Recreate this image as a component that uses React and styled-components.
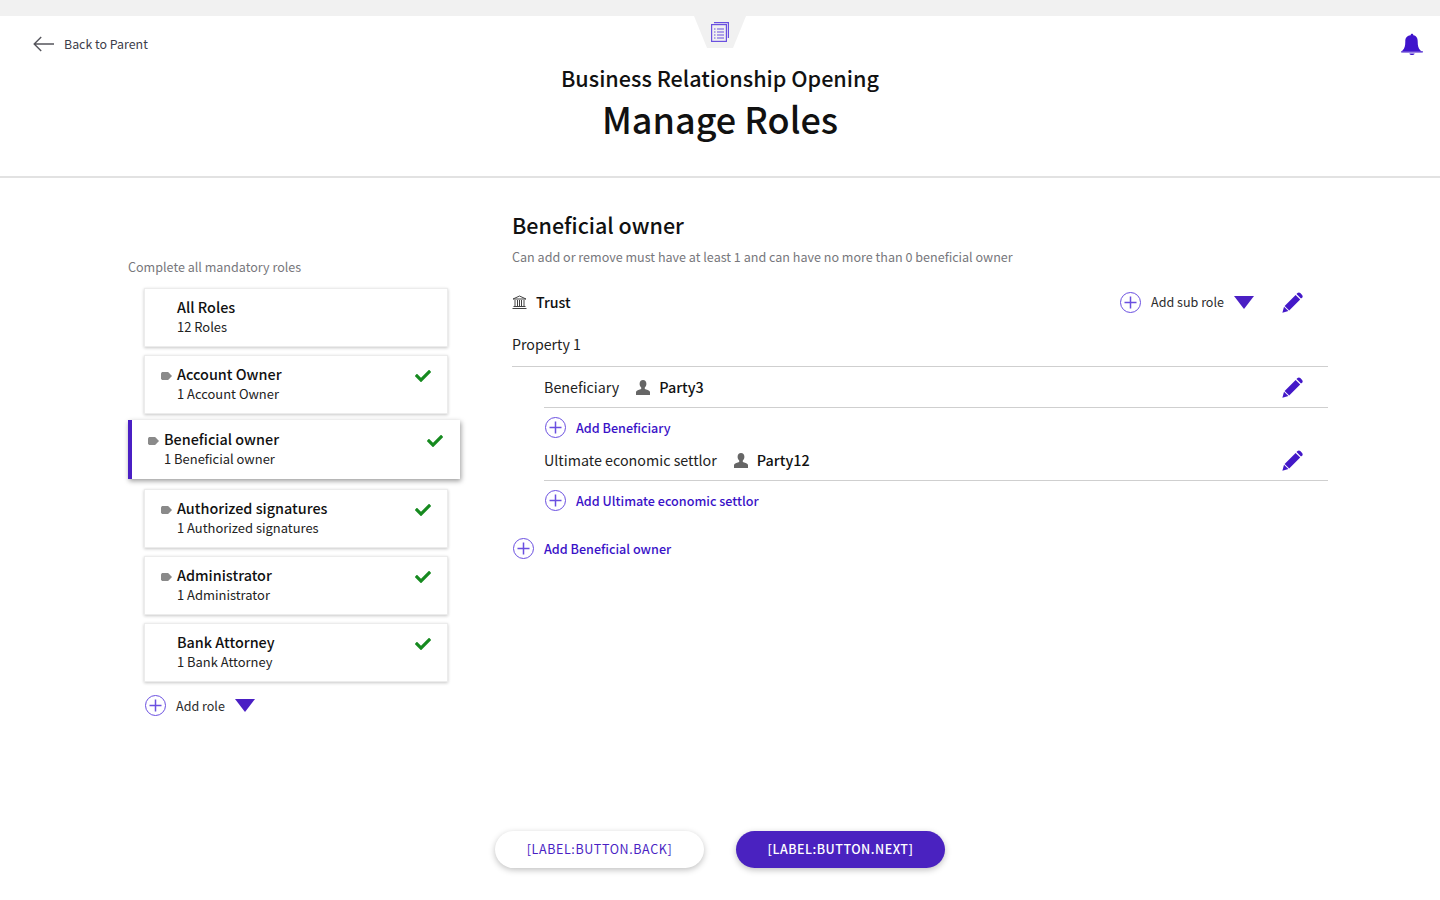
import React from 'react';
import styled, { createGlobalStyle } from 'styled-components';
import { FaCheck } from 'react-icons/fa';

const PURPLE = '#4a1fc4';

const GlobalStyle = createGlobalStyle`
  html, body {
    margin: 0;
    padding: 0;
    background: #fff;
  }
  body {
    font-family: "Noto Sans CJK JP", "Noto Sans", sans-serif;
    color: #1a1a1a;
  }
  * {
    box-sizing: border-box;
  }
`;

const Page = styled.div`
  width: 1440px;
  height: 900px;
  overflow: hidden;
  display: flex;
  flex-direction: column;
`;

const TopStrip = styled.div`
  height: 16px;
  background: #f1f1f1;
`;

const Header = styled.header`
  position: relative;
  height: 162px;
  border-bottom: 2px solid #e2e2e2;
  display: flex;
  flex-direction: column;
  align-items: center;
`;

const DocTab = styled.div`
  width: 52px;
  height: 32px;
  background: #f1f1f1;
  clip-path: polygon(0 0, 100% 0, 75% 100%, 25% 100%);
  display: flex;
  justify-content: center;
  padding-top: 6px;
  color: #6a50e0;
`;

const Subtitle = styled.div`
  margin-top: 14px;
  font-size: 21.6px;
  line-height: 32px;
  font-weight: 500;
  color: #111;
`;

const Title = styled.h1`
  margin: -1px 0 0;
  font-size: 36px;
  line-height: 50px;
  font-weight: 500;
  color: #111;
`;

const BackLink = styled.a`
  position: absolute;
  left: 33px;
  top: 18px;
  display: flex;
  align-items: center;
  gap: 10px;
  font-size: 12.4px;
  line-height: 20px;
  color: #3d3d4a;
`;

const BellButton = styled.div`
  position: absolute;
  right: 17px;
  top: 16px;
  color: #3f14cc;
  display: flex;
`;

const Main = styled.main`
  flex: 1;
  display: flex;
  padding-left: 128px;
`;

const LeftColumn = styled.section`
  width: 320px;
  padding-top: 79px;
  margin-right: 64px;
`;

const Hint = styled.div`
  font-size: 12.55px;
  line-height: 20px;
  color: #77777c;
  margin-bottom: 11px;
`;

const RoleList = styled.div`
  display: flex;
  flex-direction: column;
  gap: 8px;
  padding-left: 16px;
`;

const RoleCard = styled.div`
  position: relative;
  width: 304px;
  height: 59px;
  background: #fff;
  border: 1px solid #ececec;
  box-shadow: 0 1px 3px rgba(0, 0, 0, 0.22);
  display: flex;
  align-items: flex-start;
  padding: 8px 16px 0 32px;
  ${(p) =>
    p.$active &&
    `
    width: 332px;
    margin: -2px -12px 2px -16px;
    padding: 9px 17px 0 32px;
    border: none;
    border-left: 4px solid ${PURPLE};
    box-shadow: 1px 2px 5px rgba(0, 0, 0, 0.4);
  `}
`;

const RoleTag = styled.span`
  position: absolute;
  left: 16px;
  top: ${(p) => (p.$active ? '17px' : '16px')};
  width: 11px;
  height: 8px;
  background: #8a8a8a;
  clip-path: polygon(10% 0, 65% 0, 100% 50%, 65% 100%, 10% 100%, 0 85%, 0 15%);
`;

const RoleText = styled.div`
  flex: 1;
`;

const RoleName = styled.div`
  font-size: 14.4px;
  line-height: 20px;
  font-weight: 500;
  color: #111;
`;

const RoleCount = styled.div`
  font-size: 12.95px;
  line-height: 18px;
  margin-top: 1px;
  color: #222;
`;

const RoleCheck = styled.span`
  color: #168a1f;
  display: flex;
  margin-top: 4px;
  font-size: 16px;
`;

const AddRoleRow = styled.div`
  display: flex;
  align-items: center;
  margin-top: 5px;
  padding-left: 1px;
`;

const PlusCircle = styled.span`
  width: 21px;
  height: 21px;
  flex: none;
  display: flex;
  color: #6a4fe0;
`;

const AddRoleLabel = styled.span`
  font-size: 12.55px;
  line-height: 20px;
  color: #2c2c2c;
  margin-left: 10px;
`;

const Triangle = styled.span`
  width: 0;
  height: 0;
  margin-left: 10px;
  border-left: 10px solid transparent;
  border-right: 10px solid transparent;
  border-top: 13px solid ${PURPLE};
`;

const RightColumn = styled.section`
  width: 816px;
  padding-top: 31px;
`;

const SectionTitle = styled.h2`
  margin: 0;
  font-size: 21.5px;
  line-height: 32px;
  font-weight: 500;
  color: #111;
`;

const SectionNote = styled.p`
  margin: 6px 0 0;
  font-size: 12.57px;
  line-height: 20px;
  color: #77777c;
`;

const TrustRow = styled.div`
  display: flex;
  align-items: center;
  height: 30px;
  margin-top: 20px;
  padding-right: 25px;
`;

const TrustName = styled.span`
  margin-left: 9px;
  font-size: 14.2px;
  line-height: 20px;
  font-weight: 500;
  color: #111;
  flex: 1;
`;

const PencilButton = styled.span`
  display: flex;
  color: #4318c8;
  margin-left: ${(p) => p.$gap || 0}px;
`;

const PropertyLabel = styled.div`
  margin-top: 16px;
  padding-bottom: 11px;
  font-size: 14.2px;
  line-height: 22px;
  color: #222;
  border-bottom: 1px solid #cfcfcf;
`;

const PartyRow = styled.div`
  display: flex;
  align-items: center;
  margin-left: 32px;
  height: 41px;
  padding-right: 25px;
  border-bottom: 1px solid #cfcfcf;
`;

const PartyRole = styled.span`
  font-size: 14.3px;
  line-height: 20px;
  color: #222;
`;

const PartyIcon = styled.span`
  display: flex;
  margin: 0 9px 0 17px;
  color: #666;
`;

const PartyName = styled.span`
  flex: 1;
  font-size: 14.4px;
  line-height: 20px;
  font-weight: 500;
  color: #111;
`;

const AddLink = styled.div`
  display: flex;
  align-items: center;
  height: 32px;
  padding-top: 7px;
  margin-left: ${(p) => p.$indent || 0}px;
  margin-top: ${(p) => p.$top || 0}px;
`;

const AddLinkLabel = styled.span`
  margin-left: 10px;
  font-size: 12.6px;
  line-height: 20px;
  font-weight: 500;
  color: #3a12c8;
`;

const Footer = styled.footer`
  display: flex;
  justify-content: center;
  gap: 32px;
  height: 69px;
`;

const PillButton = styled.button`
  width: 209px;
  height: 37px;
  padding: 0 0 2px;
  border-radius: 19px;
  border: none;
  font-family: inherit;
  font-size: 12.5px;
  letter-spacing: ${(p) => (p.$primary ? '0.5px' : '0.6px')};
  background: ${(p) => (p.$primary ? '#4a22c0' : '#fff')};
  color: ${(p) => (p.$primary ? '#fff' : PURPLE)};
  font-weight: ${(p) => (p.$primary ? 500 : 400)};
  box-shadow: 0 2px 6px rgba(0, 0, 0, 0.25);
`;

const PlusIcon = () => (
  <svg width="21" height="21" viewBox="0 0 21 21" fill="none" stroke="currentColor">
    <circle cx="10.5" cy="10.5" r="10" strokeWidth="1" />
    <path d="M10.5 4.5v12M4.5 10.5h12" strokeWidth="1.5" />
  </svg>
);

const BackArrow = () => (
  <svg width="21" height="16" viewBox="0 0 21 16" fill="none" stroke="#55555c" strokeWidth="1.4">
    <path d="M21 8H1.2M8.2 1L1.2 8l7 7" />
  </svg>
);

const DocIcon = () => (
  <svg width="18" height="20" viewBox="0 0 18 20" fill="none" stroke="currentColor" strokeWidth="1.2">
    <path d="M3 .6h14.400v15.400" />
    <rect x="0.6" y="2.600" width="14.800" height="16.800" />
    <path d="M3 7h1.500M3 10h1.500M3 13h1.500M3 16h1.500M6 7h7M6 10h7M6 13h7M6 16h7" />
  </svg>
);

const BellIcon = () => (
  <svg width="22" height="24" viewBox="0 0 22 24" fill="currentColor">
    <path d="M9.600 3.300C9.600 2.400 10.200 1.800 11 1.800s1.400.6 1.400 1.500c3.300.7 4.300 3.100 4.300 6.200 0 4.300.7 6.800 2.600 8.700.3.3.7.7.7 1H1c0-.3.4-.7.7-1 1.900-1.900 2.600-4.400 2.600-8.700 0-3.100 1-5.500 5.300-6.200z" />
    <rect x="0" y="19.200" width="22" height="1.200" rx="0.6" />
    <path d="M8.400 21.400h5.200c-.3 1-1.400 1.600-2.600 1.600s-2.300-.6-2.600-1.600z" />
  </svg>
);

const BankIcon = () => (
  <svg width="15" height="14" viewBox="0 0 15 14" fill="none" stroke="#444" strokeWidth="1">
    <path d="M1 4h13L7.500 1zM0.500 13.500h14M1.500 11.500h12" />
    <path d="M3 5v6M5.500 5v6M7.500 5v6M9.500 5v6M12 5v6" />
  </svg>
);

const PersonIcon = () => (
  <svg width="14" height="15" viewBox="0 0 14 15" fill="currentColor">
    <path d="M7 0c2.100 0 3.400 1.600 3.400 3.800 0 1.600-.7 3-1.600 3.800v1.500c1.700.6 4.400 1.400 5.200 2.700V15H0v-3.200c.8-1.300 3.500-2.100 5.200-2.700V7.600C4.300 6.800 3.600 5.400 3.600 3.800 3.600 1.600 4.900 0 7 0z" />
  </svg>
);

const PencilIcon = () => (
  <svg width="21" height="21" viewBox="0 0 21 21" fill="currentColor">
    <path d="M14.500 2.100l1-1c.8-.8 2-.8 2.800 0l1.800 1.800c.8.8.8 2 0 2.800l-1.100.9z" />
    <path d="M13.600 2.900l4.600 4.600-11 11-4.600-4.600z" />
    <path d="M2 14.700l4.400 4.400-6 1.700z" />
  </svg>
);

const roles = [
  { name: 'All Roles', count: '12 Roles' },
  { name: 'Account Owner', count: '1 Account Owner', tag: true, done: true },
  { name: 'Beneficial owner', count: '1 Beneficial owner', tag: true, done: true, active: true },
  { name: 'Authorized signatures', count: '1 Authorized signatures', tag: true, done: true },
  { name: 'Administrator', count: '1 Administrator', tag: true, done: true },
  { name: 'Bank Attorney', count: '1 Bank Attorney', done: true },
];

const App = () => {
  return (
    <Page>
      <GlobalStyle />
      <TopStrip />
      <Header>
        <BackLink>
          <BackArrow />
          Back to Parent
        </BackLink>
        <DocTab>
          <DocIcon />
        </DocTab>
        <Subtitle>Business Relationship Opening</Subtitle>
        <Title>Manage Roles</Title>
        <BellButton>
          <BellIcon />
        </BellButton>
      </Header>
      <Main>
        <LeftColumn>
          <Hint>Complete all mandatory roles</Hint>
          <RoleList>
            {roles.map((role) => (
              <RoleCard key={role.name} $active={role.active}>
                {role.tag && <RoleTag $active={role.active} />}
                <RoleText>
                  <RoleName>{role.name}</RoleName>
                  <RoleCount>{role.count}</RoleCount>
                </RoleText>
                {role.done && (
                  <RoleCheck>
                    <FaCheck />
                  </RoleCheck>
                )}
              </RoleCard>
            ))}
            <AddRoleRow>
              <PlusCircle>
                <PlusIcon />
              </PlusCircle>
              <AddRoleLabel>Add role</AddRoleLabel>
              <Triangle />
            </AddRoleRow>
          </RoleList>
        </LeftColumn>
        <RightColumn>
          <SectionTitle>Beneficial owner</SectionTitle>
          <SectionNote>
            Can add or remove must have at least 1 and can have no more than 0 beneficial owner
          </SectionNote>
          <TrustRow>
            <BankIcon />
            <TrustName>Trust</TrustName>
            <PlusCircle>
              <PlusIcon />
            </PlusCircle>
            <AddRoleLabel>Add sub role</AddRoleLabel>
            <Triangle />
            <PencilButton $gap={28}>
              <PencilIcon />
            </PencilButton>
          </TrustRow>
          <PropertyLabel>Property 1</PropertyLabel>
          <PartyRow>
            <PartyRole>Beneficiary</PartyRole>
            <PartyIcon>
              <PersonIcon />
            </PartyIcon>
            <PartyName>Party3</PartyName>
            <PencilButton>
              <PencilIcon />
            </PencilButton>
          </PartyRow>
          <AddLink $indent={33}>
            <PlusCircle>
              <PlusIcon />
            </PlusCircle>
            <AddLinkLabel>Add Beneficiary</AddLinkLabel>
          </AddLink>
          <PartyRow>
            <PartyRole>Ultimate economic settlor</PartyRole>
            <PartyIcon>
              <PersonIcon />
            </PartyIcon>
            <PartyName>Party12</PartyName>
            <PencilButton>
              <PencilIcon />
            </PencilButton>
          </PartyRow>
          <AddLink $indent={33}>
            <PlusCircle>
              <PlusIcon />
            </PlusCircle>
            <AddLinkLabel>Add Ultimate economic settlor</AddLinkLabel>
          </AddLink>
          <AddLink $indent={1} $top={16}>
            <PlusCircle>
              <PlusIcon />
            </PlusCircle>
            <AddLinkLabel>Add Beneficial owner</AddLinkLabel>
          </AddLink>
        </RightColumn>
      </Main>
      <Footer>
        <PillButton>[LABEL:BUTTON.BACK]</PillButton>
        <PillButton $primary>[LABEL:BUTTON.NEXT]</PillButton>
      </Footer>
    </Page>
  );
};

export default App;
